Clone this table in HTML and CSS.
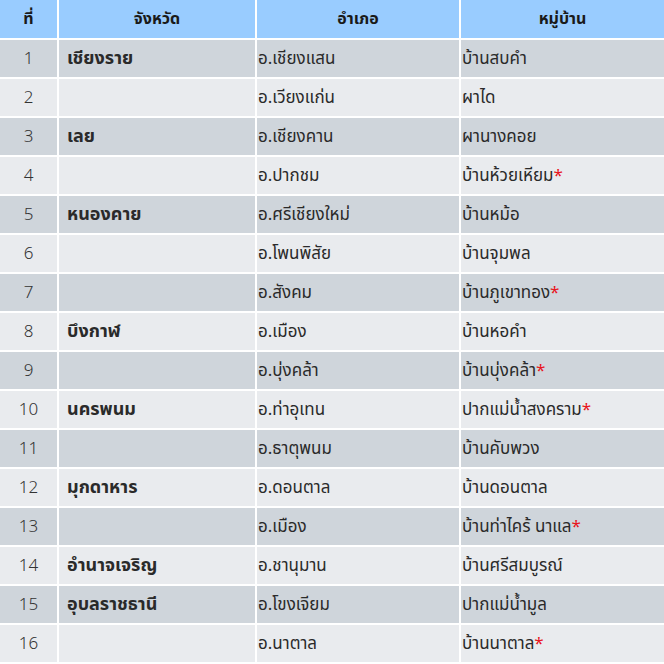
FILE: index.html
```html
<!DOCTYPE html>
<html lang="th">
<head>
<meta charset="utf-8">
<link rel="stylesheet" href="styles.css">
</head>
<body>
<div class="grid">
  <div class="h">ที่</div><div class="h">จังหวัด</div><div class="h">อำเภอ</div><div class="h">หมู่บ้าน</div>

  <div class="c n d">1</div><div class="c p d">เชียงราย</div><div class="c d">อ.เชียงแสน</div><div class="c d">บ้านสบคำ</div>
  <div class="c n l">2</div><div class="c p l"></div><div class="c l">อ.เวียงแก่น</div><div class="c l">ผาได</div>
  <div class="c n d">3</div><div class="c p d">เลย</div><div class="c d">อ.เชียงคาน</div><div class="c d">ผานางคอย</div>
  <div class="c n l">4</div><div class="c p l"></div><div class="c l">อ.ปากชม</div><div class="c l">บ้านห้วยเหียม<span class="s">*</span></div>
  <div class="c n d">5</div><div class="c p d">หนองคาย</div><div class="c d">อ.ศรีเชียงใหม่</div><div class="c d">บ้านหม้อ</div>
  <div class="c n l">6</div><div class="c p l"></div><div class="c l">อ.โพนพิสัย</div><div class="c l">บ้านจุมพล</div>
  <div class="c n d">7</div><div class="c p d"></div><div class="c d">อ.สังคม</div><div class="c d">บ้านภูเขาทอง<span class="s">*</span></div>
  <div class="c n l">8</div><div class="c p l">บึงกาฬ</div><div class="c l">อ.เมือง</div><div class="c l">บ้านหอคำ</div>
  <div class="c n d">9</div><div class="c p d"></div><div class="c d">อ.บุ่งคล้า</div><div class="c d">บ้านบุ่งคล้า<span class="s">*</span></div>
  <div class="c n l">10</div><div class="c p l">นครพนม</div><div class="c l">อ.ท่าอุเทน</div><div class="c l">ปากแม่น้ำสงคราม<span class="s">*</span></div>
  <div class="c n d">11</div><div class="c p d"></div><div class="c d">อ.ธาตุพนม</div><div class="c d">บ้านคับพวง</div>
  <div class="c n l">12</div><div class="c p l">มุกดาหาร</div><div class="c l">อ.ดอนตาล</div><div class="c l">บ้านดอนตาล</div>
  <div class="c n d">13</div><div class="c p d"></div><div class="c d">อ.เมือง</div><div class="c d">บ้านท่าไคร้ นาแล<span class="s">*</span></div>
  <div class="c n l">14</div><div class="c p l">อำนาจเจริญ</div><div class="c l">อ.ชานุมาน</div><div class="c l">บ้านศรีสมบูรณ์</div>
  <div class="c n d">15</div><div class="c p d">อุบลราชธานี</div><div class="c d">อ.โขงเจียม</div><div class="c d">ปากแม่น้ำมูล</div>
  <div class="c n l">16</div><div class="c p l"></div><div class="c l">อ.นาตาล</div><div class="c l">บ้านนาตาล<span class="s">*</span></div>
</div>
</body>
</html>
```
FILE: styles.css
```css
html, body {
  margin: 0;
  padding: 0;
  background: #ffffff;
}
body {
  font-family: "Noto Sans Thai", Tahoma, "DejaVu Sans", "Noto Sans", sans-serif;
  font-size: 17px;
  color: #2a2a2a;
}
.grid {
  display: grid;
  grid-template-columns: 57px 196px 202px 203px;
  grid-template-rows: 38px repeat(16, 37px);
  gap: 2px;
  width: 664px;
}
.h {
  background: #99ccff;
  font-weight: bold;
  font-size: 16px;
  display: flex;
  align-items: center;
  justify-content: center;
  color: #1a1a1a;
}
.c {
  display: flex;
  align-items: center;
  padding-left: 1px;
  white-space: nowrap;
}
.n {
  justify-content: center;
  padding-left: 0;
  font-weight: 300;
  color: #333;
}
.p {
  padding-left: 8px;
  font-weight: bold;
  font-size: 18px;
}
.d { background: #cfd5db; }
.l { background: #e9ebee; }
.s { color: #e8141c; }
```
